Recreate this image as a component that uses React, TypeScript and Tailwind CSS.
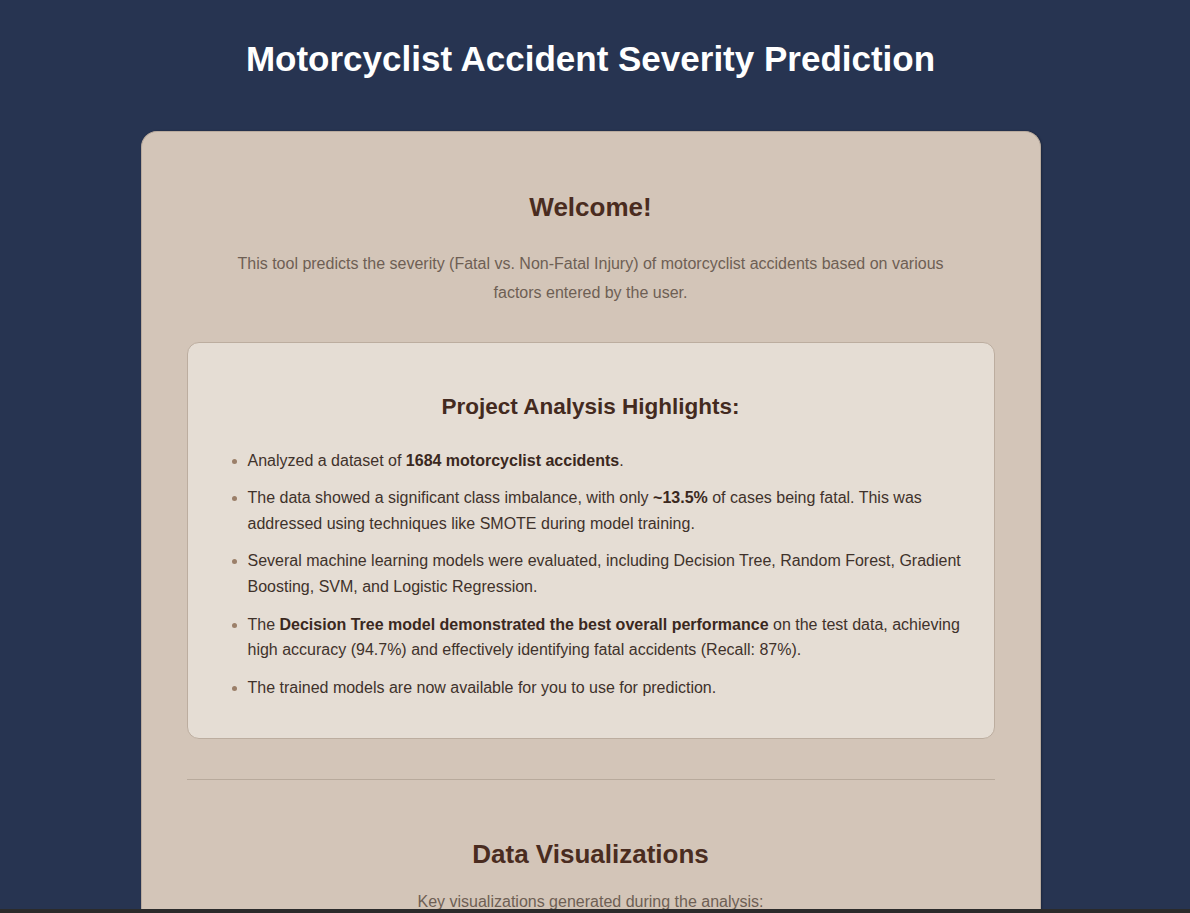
import React from 'react';

const highlights: React.ReactNode[] = [
  <>
    Analyzed a dataset of <strong className="font-bold text-[#3a2820]">1684 motorcyclist accidents</strong>.
  </>,
  <>
    The data showed a significant class imbalance, with only <strong className="font-bold text-[#3a2820]">~13.5%</strong> of
    cases being fatal. This was addressed using techniques like SMOTE during model training.
  </>,
  <>
    Several machine learning models were evaluated, including Decision Tree, Random Forest, Gradient Boosting, SVM,
    and Logistic Regression.
  </>,
  <>
    The <strong className="font-bold text-[#3a2820]">Decision Tree model demonstrated the best overall performance</strong>{' '}
    on the test data, achieving high accuracy (94.7%) and effectively identifying fatal accidents (Recall: 87%).
  </>,
  <>The trained models are now available for you to use for prediction.</>,
];

const App: React.FC = () => {
  return (
    <div className="min-h-screen bg-[#273451] pr-[9px] font-['Liberation_Sans',Arial,sans-serif]">
      <header className="pt-[38px] pb-[52px] text-center">
        <h1 className="text-[35px] leading-[41px] font-bold text-white">Motorcyclist Accident Severity Prediction</h1>
      </header>

      <main className="mx-auto w-[900px] rounded-t-[16px] border border-b-0 border-[#b9ab9e] bg-[#d3c5b8] px-[45px] pt-[60px] pb-10 shadow-[1px_0_2px_rgba(0,0,0,0.25)]">
        <section className="text-center">
          <h2 className="text-[26px] leading-[30px] font-bold text-[#4a2c20]">Welcome!</h2>
          <p className="mx-auto mt-[28px] max-w-[720px] text-[16px] leading-[28.8px] text-[#6e5f54]">
            This tool predicts the severity (Fatal vs. Non-Fatal Injury) of motorcyclist accidents based on various
            factors entered by the user.
          </p>
        </section>

        <section className="mt-[34px] rounded-[12px] border border-[#bcad9f] bg-[#e5ddd4] px-5 pt-[51px] pb-[26px]">
          <h3 className="text-center text-[22.5px] leading-[26px] font-bold text-[#432a20]">
            Project Analysis Highlights:
          </h3>
          <ul className="mt-[28px] list-disc pl-10 marker:text-[#9b7f69]">
            {highlights.map((item, i) => (
              <li key={i} className="mb-3 text-[16px] leading-[25.6px] text-[#3f322b]">
                {item}
              </li>
            ))}
          </ul>
        </section>

        <hr className="mt-[40px] border-0 border-t border-[#b8aa9c]" />

        <section className="mt-[59px] text-center">
          <h2 className="text-[26px] leading-[30px] font-bold text-[#4a2c20]">Data Visualizations</h2>
          <p className="mt-[19px] text-[16px] leading-[28.8px] text-[#6e5f54]">
            Key visualizations generated during the analysis:
          </p>
        </section>
      </main>

      <div className="fixed right-0 bottom-0 left-0 h-[4px] bg-[#2b2b2b]" />
    </div>
  );
};

export default App;
